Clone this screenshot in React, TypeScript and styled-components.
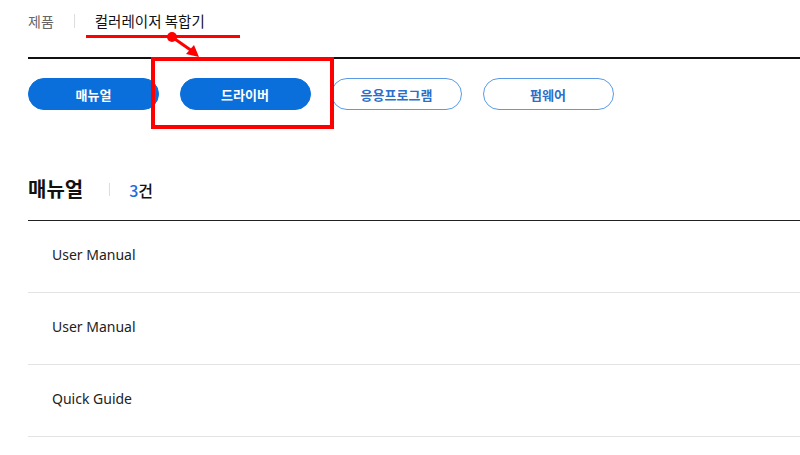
import React from "react";
import styled, { createGlobalStyle } from "styled-components";

const Global = createGlobalStyle`
  html, body { margin: 0; padding: 0; background: #fff; }
  body { font-family: "Noto Sans", "Noto Sans CJK KR", sans-serif; color: #111; }
  * { box-sizing: border-box; }
`;

const Page = styled.div`
  position: relative;
  width: 800px;
  height: 455px;
  overflow: hidden;
  padding-left: 28px;
`;

const Breadcrumb = styled.nav`
  display: flex;
  align-items: center;
  height: 59px;
  padding-bottom: 16px;
  border-bottom: 2px solid #111;
  font-family: "Noto Sans CJK KR", sans-serif;
  font-size: 14px;
`;

const Crumb = styled.span<{ $current?: boolean }>`
  color: ${(p) => (p.$current ? "#111" : "#666")};
  font-size: ${(p) => (p.$current ? "14.5px" : "14px")};
`;

const CrumbSep = styled.span`
  width: 1px;
  height: 14px;
  background: #ddd;
  margin: 0 20px 0 20px;
`;

const Tabs = styled.div`
  display: flex;
  gap: 20.5px;
  margin-top: 19px;
`;

const Tab = styled.button<{ $active?: boolean }>`
  width: 131px;
  height: 32px;
  border-radius: 16px;
  border: 1px solid ${(p) => (p.$active ? "#0b6fdb" : "#5b9be6")};
  background: ${(p) => (p.$active ? "#0b6fdb" : "#fff")};
  color: ${(p) => (p.$active ? "#fff" : "#2b6fc9")};
  font-family: "Noto Sans CJK KR", sans-serif;
  font-weight: 700;
  font-size: 13px;
  padding: 0;
  cursor: pointer;
`;

const Heading = styled.div`
  display: flex;
  align-items: center;
  height: 52px;
  margin-top: 59px;
  padding-bottom: 12px;
  border-bottom: 1px solid #222;
`;

const Title = styled.h2`
  margin: 0;
  font-family: "Noto Sans CJK KR", sans-serif;
  font-size: 20px;
  font-weight: 700;
  color: #111;
`;

const TitleSep = styled.span`
  width: 1px;
  height: 13px;
  background: #ddd;
  margin: 2px 19px 0 26px;
`;

const Count = styled.span`
  font-family: "Noto Sans CJK KR", sans-serif;
  font-size: 16px;
  font-weight: 500;
  color: #111;
  margin-top: 2px;
  & b {
    color: #1a6fe0;
    font-weight: 500;
  }
`;

const List = styled.ul`
  list-style: none;
  margin: 0;
  padding: 0;
`;

const Row = styled.li`
  display: flex;
  align-items: center;
  height: 72px;
  padding: 0 24px 4px;
  border-bottom: 1px solid #e3e3e3;
  font-size: 14px;
  color: #222;
`;

const Overlay = styled.svg`
  position: absolute;
  left: 0;
  top: 0;
  pointer-events: none;
`;

const items = ["User Manual", "User Manual", "Quick Guide"];
const tabs = [
  { label: "매뉴얼", active: true },
  { label: "드라이버", active: true },
  { label: "응용프로그램", active: false },
  { label: "펌웨어", active: false },
];

export default function App() {
  return (
    <>
      <Global />
      <Page>
        <Breadcrumb>
          <Crumb>제품</Crumb>
          <CrumbSep />
          <Crumb $current>컬러레이저 복합기</Crumb>
        </Breadcrumb>
        <Tabs>
          {tabs.map((t) => (
            <Tab key={t.label} $active={t.active}>
              {t.label}
            </Tab>
          ))}
        </Tabs>
        <Heading>
          <Title>매뉴얼</Title>
          <TitleSep />
          <Count>
            <b>3</b>건
          </Count>
        </Heading>
        <List>
          {items.map((it, i) => (
            <Row key={i}>{it}</Row>
          ))}
        </List>
        <Overlay width="800" height="455" viewBox="0 0 800 455">
          <line x1="86" y1="36.5" x2="240" y2="36.5" stroke="#f00" strokeWidth="3" />
          <circle cx="172" cy="37" r="5" fill="#f00" />
          <line x1="172" y1="37" x2="192" y2="51" stroke="#f00" strokeWidth="3" />
          <polygon points="199,57 186,54 194,45" fill="#f00" />
          <rect x="153" y="59" width="179" height="68" fill="none" stroke="#f00" strokeWidth="4" />
        </Overlay>
      </Page>
    </>
  );
}
